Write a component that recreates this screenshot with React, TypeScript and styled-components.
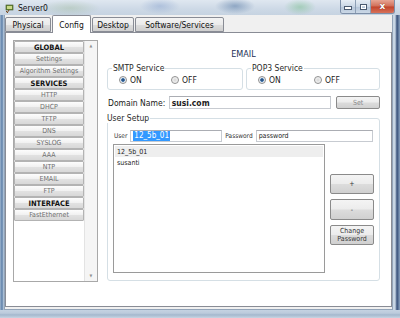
import React from "react";
import styled, { createGlobalStyle } from "styled-components";

const GlobalStyle = createGlobalStyle`
  html, body {
    margin: 0;
    padding: 0;
    background: #ffffff;
  }
  body {
    font-family: "DejaVu Sans Condensed", "DejaVu Sans", sans-serif;
  }
`;

const sidebarItems = [
  { label: "GLOBAL", header: true },
  { label: "Settings" },
  { label: "Algorithm Settings" },
  { label: "SERVICES", header: true },
  { label: "HTTP" },
  { label: "DHCP" },
  { label: "TFTP" },
  { label: "DNS" },
  { label: "SYSLOG" },
  { label: "AAA" },
  { label: "NTP" },
  { label: "EMAIL" },
  { label: "FTP" },
  { label: "INTERFACE", header: true },
  { label: "FastEthernet" },
];

const tabs = [
  { label: "Physical", width: 46 },
  { label: "Config", width: 39 },
  { label: "Desktop", width: 42 },
  { label: "Software/Services", width: 89 },
];

const Radio: React.FC<{ checked?: boolean; label: string; width: number }> = ({
  checked,
  label,
  width,
}) => (
  <RadioItem style={{ width }}>
    <RadioDot checked={checked} />
    <span>{label}</span>
  </RadioItem>
);

const App: React.FC = () => {
  return (
    <>
      <GlobalStyle />
      <Window>
        <TitleBar>
          <TitleIcon viewBox="0 0 10 10">
            <rect x="1" y="2" width="7" height="5" fill="#6b8e3a" stroke="#3d4f22" strokeWidth="0.6" />
            <rect x="2" y="3" width="5" height="3" fill="#c9d98a" />
            <path d="M1 8 L3 10 M4 7 L2 10" stroke="#7a4a1c" strokeWidth="1" />
          </TitleIcon>
          <TitleText>Server0</TitleText>
          <Controls>
            <CtrlButton>
              <MinGlyph />
            </CtrlButton>
            <CtrlButton>
              <MaxGlyph />
            </CtrlButton>
            <CloseButton>x</CloseButton>
          </Controls>
        </TitleBar>

        <FrameRow>
          <Client>
            <TabBar>
              {tabs.map((t) => (
                <Tab key={t.label} width={t.width} active={t.label === "Config"}>
                  {t.label}
                </Tab>
              ))}
            </TabBar>

            <Panel>
              <Sidebar>
                <SideButtons>
                  {sidebarItems.map((item) => (
                    <SideButton key={item.label} header={item.header}>
                      {item.label}
                    </SideButton>
                  ))}
                </SideButtons>
                <ScrollTrack>
                  <Arrow>▲</Arrow>
                  <Arrow>▼</Arrow>
                </ScrollTrack>
              </Sidebar>

              <Main>
                <Heading>EMAIL</Heading>

                <ServiceRow>
                  <Group grow={136}>
                    <Legend>SMTP Service</Legend>
                    <RadioRow>
                      <Radio checked label="ON" width={52} />
                      <Radio label="OFF" width={40} />
                    </RadioRow>
                  </Group>
                  <Group grow={134}>
                    <Legend>POP3 Service</Legend>
                    <RadioRow>
                      <Radio checked label="ON" width={56} />
                      <Radio label="OFF" width={40} />
                    </RadioRow>
                  </Group>
                </ServiceRow>

                <DomainRow>
                  <FieldLabel>Domain Name:</FieldLabel>
                  <TextBox width={163} bold>
                    susi.com
                  </TextBox>
                  <PushButton width={44} height={13} disabled>
                    Set
                  </PushButton>
                </DomainRow>

                <UserGroup>
                  <Legend>User Setup</Legend>
                  <UserRow>
                    <SmallLabel>User</SmallLabel>
                    <TextBox width={92} height={12}>
                      <Selected>12_5b_01</Selected>
                    </TextBox>
                    <SmallLabel>Password</SmallLabel>
                    <TextBox width={117} height={12}>
                      password
                    </TextBox>
                  </UserRow>
                  <UserBody>
                    <ListBox>
                      <ListItem selected>12_5b_01</ListItem>
                      <ListItem>susanti</ListItem>
                    </ListBox>
                    <ButtonColumn>
                      <PushButton width={44} height={20}>
                        +
                      </PushButton>
                      <PushButton width={44} height={21}>
                        -
                      </PushButton>
                      <PushButton width={44} height={20}>
                        Change
                        <br />
                        Password
                      </PushButton>
                    </ButtonColumn>
                  </UserBody>
                </UserGroup>
              </Main>
            </Panel>
          </Client>
        </FrameRow>
        <BottomFrame />
      </Window>
    </>
  );
};
export default App;

const Window = styled.div`
  width: 400px;
  height: 318px;
  display: flex;
  flex-direction: column;
  overflow: hidden;
  background: linear-gradient(90deg, #9fb6cf 0px, #5d7fa8 2px, #c3d3e3 4px, #c8d6e4 395px, #37507a 397px, #8aa2bf 400px);
`;

const TitleBar = styled.div`
  height: 15px;
  display: flex;
  align-items: center;
  padding-left: 5px;
  background:
    radial-gradient(ellipse 30px 8px at 70px 8px, rgba(150, 180, 140, 0.35), transparent),
    radial-gradient(ellipse 20px 8px at 160px 6px, rgba(120, 150, 200, 0.4), transparent),
    radial-gradient(ellipse 20px 8px at 235px 6px, rgba(60, 100, 150, 0.45), transparent),
    radial-gradient(ellipse 16px 8px at 300px 7px, rgba(120, 190, 140, 0.5), transparent),
    linear-gradient(180deg, #dfe7f0 0%, #cdd9e6 60%, #c6d3e1 100%);
`;

const TitleIcon = styled.svg`
  width: 10px;
  height: 10px;
  flex: none;
`;

const TitleText = styled.span`
  margin-left: 3px;
  font-size: 8.5px;
  color: #111;
  flex: 1;
`;

const Controls = styled.div`
  display: flex;
  align-self: flex-start;
  margin-right: 5px;
  height: 13px;
  border: 1px solid #7d8fa8;
  border-top: none;
  border-radius: 0 0 3px 3px;
  overflow: hidden;
`;

const CtrlButton = styled.div`
  width: 14px;
  height: 13px;
  display: flex;
  align-items: center;
  justify-content: center;
  background: linear-gradient(180deg, #e6edf5 0%, #c9d6e5 50%, #b3c4d8 51%, #cbd8e6 100%);
  border-right: 1px solid #8d9fb5;
`;

const MinGlyph = styled.div`
  width: 6px;
  height: 2px;
  margin-top: 3px;
  background: #fff;
  border: 1px solid #4a5a70;
`;

const MaxGlyph = styled.div`
  width: 5px;
  height: 4px;
  background: transparent;
  border: 1px solid #4a5a70;
  box-shadow: inset 0 0 0 1px #fff;
`;

const CloseButton = styled.div`
  width: 23px;
  height: 13px;
  display: flex;
  align-items: center;
  justify-content: center;
  font-family: "DejaVu Sans", sans-serif;
  font-weight: bold;
  font-size: 9px;
  line-height: 1;
  color: #fff;
  text-shadow: 0 0 1px #5a1a10;
  background: linear-gradient(180deg, #e7a594 0%, #d06e58 48%, #c1432b 52%, #d8725a 100%);
`;

const FrameRow = styled.div`
  flex: 1;
  display: flex;
  padding: 0 7px 0 4px;
  min-height: 0;
`;

const Client = styled.div`
  flex: 1;
  display: flex;
  flex-direction: column;
  background: #f0f0f0;
  border: 1px solid #93a4b8;
  border-top: none;
`;

const TabBar = styled.div`
  height: 17px;
  display: flex;
  align-items: flex-end;
  gap: 1px;
`;

const Tab = styled.div<{ active?: boolean; width: number }>`
  width: ${(p) => p.width}px;
  height: ${(p) => (p.active ? "18px" : "15px")};
  margin-bottom: ${(p) => (p.active ? "-1px" : "0")};
  box-sizing: border-box;
  display: flex;
  align-items: center;
  justify-content: center;
  white-space: nowrap;
  font-size: 8.5px;
  color: #111;
  border: 1px solid #898c95;
  border-bottom: ${(p) => (p.active ? "none" : "1px solid #898c95")};
  border-radius: 2px 2px 0 0;
  background: ${(p) =>
    p.active ? "#ffffff" : "linear-gradient(180deg, #f3f3f3 0%, #ebebeb 50%, #dddddd 51%, #cfcfcf 100%)"};
  position: relative;
  z-index: ${(p) => (p.active ? 1 : 0)};
`;

const Panel = styled.div`
  flex: 1;
  display: flex;
  align-items: flex-start;
  gap: 9px;
  background: #ffffff;
  border: 1px solid #898c95;
  margin-bottom: 2px;
  padding: 7px 0 0 7px;
`;

const Sidebar = styled.div`
  width: 83px;
  height: 240px;
  display: flex;
  border: 1px solid #a8a8a8;
  background: #fff;
`;

const SideButtons = styled.div`
  width: 70px;
  display: flex;
  flex-direction: column;
`;

const SideButton = styled.div<{ header?: boolean }>`
  height: 12px;
  box-sizing: border-box;
  display: flex;
  align-items: center;
  justify-content: center;
  border: 1px solid #b3b3b3;
  border-radius: 1px;
  background: linear-gradient(180deg, #fdfdfd 0%, #f0f0f0 50%, #e2e2e2 51%, #d8d8d8 100%);
  font-size: ${(p) => (p.header ? "7.5px" : "7px")};
  font-weight: ${(p) => (p.header ? "bold" : "normal")};
  color: ${(p) => (p.header ? "#111" : "#707070")};
  white-space: nowrap;
  overflow: hidden;
`;

const ScrollTrack = styled.div`
  flex: 1;
  display: flex;
  flex-direction: column;
  justify-content: space-between;
  align-items: center;
  background: #f5f5f5;
  border-left: 1px solid #e3e3e3;
  padding: 1px 0;
`;

const Arrow = styled.span`
  font-size: 4px;
  color: #909090;
  line-height: 8px;
`;

const Main = styled.div`
  width: 273px;
  display: flex;
  flex-direction: column;
`;

const Heading = styled.div`
  height: 23px;
  box-sizing: border-box;
  padding-top: 5px;
  display: flex;
  align-items: center;
  justify-content: center;
  font-size: 9px;
  color: #1c2f55;
`;

const ServiceRow = styled.div`
  display: flex;
  gap: 3px;
`;

const Group = styled.fieldset<{ grow: number }>`
  width: ${(p) => p.grow}px;
  box-sizing: border-box;
  margin: 0;
  padding: 0 0 3px 11px;
  border: 1px solid #d5dfe5;
  border-radius: 3px;
`;

const Legend = styled.legend`
  font-size: 8.5px;
  color: #2a2a2a;
  padding: 0 1px;
  margin-left: -7px;
  line-height: 10px;
`;

const RadioRow = styled.div`
  display: flex;
  height: 13px;
  align-items: center;
`;

const RadioItem = styled.div`
  display: flex;
  align-items: center;
  gap: 3px;
  font-size: 8.5px;
  color: #222;
`;

const RadioDot = styled.span<{ checked?: boolean }>`
  width: 6px;
  height: 6px;
  border-radius: 50%;
  border: 1px solid #8f8f8f;
  background: ${(p) =>
    p.checked
      ? "radial-gradient(circle, #1f3f6a 0, #3a6ea5 1.5px, #dfe8f2 2.2px, #f4f4f4 3px)"
      : "radial-gradient(circle, #d6d6d6 0, #eaeaea 2px, #f7f7f7 3px)"};
`;

const DomainRow = styled.div`
  display: flex;
  align-items: center;
  margin-top: 6px;
  height: 13px;
`;

const FieldLabel = styled.span`
  width: 61px;
  padding-left: 1px;
  font-size: 8.5px;
  color: #1a1a1a;
`;

const TextBox = styled.div<{ width: number; height?: number; bold?: boolean }>`
  width: ${(p) => p.width}px;
  height: ${(p) => p.height || 13}px;
  box-sizing: border-box;
  border: 1px solid #c7cbd1;
  border-top-color: #abadb3;
  display: flex;
  align-items: center;
  padding-left: 2px;
  font-size: ${(p) => (p.bold ? "8.5px" : "7px")};
  font-weight: ${(p) => (p.bold ? "bold" : "normal")};
  color: #222;
  background: #fff;
`;

const Selected = styled.span`
  background: #3399ff;
  color: #fff;
  font-size: 8px;
  padding: 0 1px;
  line-height: 10px;
`;

const PushButton = styled.div<{ width: number; height: number; disabled?: boolean }>`
  width: ${(p) => p.width}px;
  height: ${(p) => p.height}px;
  box-sizing: border-box;
  margin-left: 5px;
  display: flex;
  align-items: center;
  justify-content: center;
  text-align: center;
  border: 1px solid #8a8a8a;
  border-radius: 2px;
  background: linear-gradient(180deg, #f4f4f4 0%, #ececec 48%, #dcdcdc 52%, #d0d0d0 100%);
  font-size: 7px;
  line-height: 8px;
  color: ${(p) => (p.disabled ? "#8c8c8c" : "#333")};
`;

const UserGroup = styled.fieldset`
  margin: 4px 0 0;
  padding: 7px 5px 5px 5px;
  box-sizing: border-box;
  height: 168px;
  border: 1px solid #d5dfe5;
  border-radius: 3px;
  display: flex;
  flex-direction: column;
`;

const UserRow = styled.div`
  display: flex;
  align-items: center;
  height: 12px;
`;

const SmallLabel = styled.span`
  font-size: 6.5px;
  color: #333;
  padding: 0 3px 0 0;
  margin-left: 1px;
  & + div + & {
    margin-left: 3px;
  }
`;

const UserBody = styled.div`
  flex: 1;
  display: flex;
  align-items: flex-start;
  margin-top: 2px;
`;

const ListBox = styled.div`
  width: 212px;
  height: 129px;
  box-sizing: border-box;
  border: 1px solid #9a9a9a;
  padding: 1px;
  display: flex;
  flex-direction: column;
`;

const ListItem = styled.div<{ selected?: boolean }>`
  height: 11px;
  display: flex;
  align-items: center;
  padding-left: 2px;
  font-size: 7px;
  color: #222;
  background: ${(p) => (p.selected ? "#eeeeee" : "transparent")};
`;

const ButtonColumn = styled.div`
  display: flex;
  flex-direction: column;
  gap: 5px;
  margin-top: 30px;
`;

const BottomFrame = styled.div`
  height: 8px;
  background: linear-gradient(180deg, #c5d3e2 0%, #bccbdc 40%, #a4b8ce 60%, #c7d4e2 100%);
`;
